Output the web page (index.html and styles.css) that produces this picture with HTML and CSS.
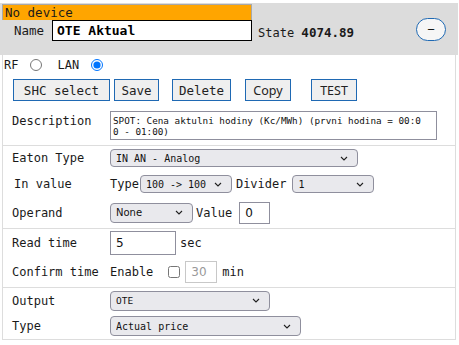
FILE: index.html
```html
<!DOCTYPE html>
<html lang="en">
<head>
    <meta charset="UTF-8">
    <meta name="viewport" content="width=device-width, initial-scale=1.0">
    <title>OTE Aktual</title>
    <link rel="stylesheet" href="styles.css">
</head>
<body>
    <div class="device">
        <div class="device-head">
            <div class="head-left">
                <div class="status">No device</div>
                <div class="name-row">
                    <span class="name-label">Name</span>
                    <input class="name-input" type="text" value="OTE Aktual">
                </div>
            </div>
            <div class="state">State <b>4074.89</b></div>
            <button class="collapse">&minus;</button>
        </div>

        <div class="device-body">
            <div class="conn">
                <span>RF</span> <input type="radio" name="conn">
                <span class="lan">LAN</span> <input type="radio" name="conn" checked>
            </div>

            <div class="actions">
                <button class="btn btn-shc">SHC select</button>
                <button class="btn btn-save">Save</button>
                <button class="btn btn-delete">Delete</button>
                <button class="btn btn-sans btn-copy">Copy</button>
                <button class="btn btn-sans btn-test">TEST</button>
            </div>

            <table class="props">
                <tbody class="group">
                    <tr class="row-desc">
                        <td class="lbl">Description</td>
                        <td><textarea class="desc">SPOT: Cena aktulni hodiny (Kc/MWh) (prvni hodina = 00:00 - 01:00)</textarea></td>
                    </tr>
                </tbody>
                <tbody class="group">
                    <tr class="row-26">
                        <td class="lbl">Eaton Type</td>
                        <td><select class="sel sel-eaton"><option>IN AN - Analog</option></select></td>
                    </tr>
                    <tr class="row-26">
                        <td class="lbl lbl-indent">In value</td>
                        <td class="cell-flex"><span class="txt">Type</span><select class="sel sel-type"><option>100 -&gt; 100</option></select><span class="txt divider">Divider</span><select class="sel sel-div"><option>1</option></select></td>
                    </tr>
                    <tr class="row-op">
                        <td class="lbl">Operand</td>
                        <td class="cell-flex"><select class="sel sel-op"><option>None</option></select><span class="txt">Value</span><input class="inp inp-val" type="text" value="0"></td>
                    </tr>
                </tbody>
                <tbody class="group">
                    <tr class="row-read">
                        <td class="lbl">Read time</td>
                        <td class="cell-flex"><input class="inp inp-read" type="text" value="5"><span class="txt sec">sec</span></td>
                    </tr>
                    <tr class="row-confirm">
                        <td class="lbl">Confirm time</td>
                        <td class="cell-flex"><span class="txt">Enable</span><input class="chk" type="checkbox"><input class="inp inp-confirm" type="text" value="30" disabled><span class="txt min">min</span></td>
                    </tr>
                </tbody>
                <tbody class="group">
                    <tr class="row-26">
                        <td class="lbl">Output</td>
                        <td><select class="sel sel-out"><option>OTE</option></select></td>
                    </tr>
                    <tr class="row-26">
                        <td class="lbl">Type</td>
                        <td><select class="sel sel-price"><option>Actual price</option></select></td>
                    </tr>
                </tbody>
            </table>
        </div>
    </div>
</body>
</html>
```

FILE: styles.css
```css
:root {
    --head-bg: #dcdcdc;
    --line: #dddddd;
    --blue: #1f69b3;
    --btn-bg: #efefef;
    --sel-bg: #e9e9ed;
    --sel-border: #8f8f9d;
}

* {
    box-sizing: border-box;
}

body {
    margin: 0;
    padding-top: 3px;
    font-family: "DejaVu Sans Mono", monospace;
    font-size: 12px;
    color: #1a1a1a;
    background: #fff;
}

.device {
    width: 458px;
}

/* header */
.device-head {
    background: var(--head-bg);
    height: 52px;
    display: flex;
    align-items: flex-start;
    padding-left: 2px;
    font-size: 12.5px;
}

.head-left {
    width: 250px;
}

.status {
    height: 16px;
    margin-top: 1px;
    background: #ffa500;
    border: 1px solid #a8a8a8;
    border-bottom: none;
    line-height: 15px;
    padding-left: 2px;
}

.name-row {
    display: flex;
    align-items: center;
}

.name-label {
    width: 50px;
    padding-left: 12px;
}

.name-input {
    width: 200px;
    height: 21px;
    border: 1px solid #000;
    background: #fff;
    font-family: "DejaVu Sans Mono", monospace;
    font-weight: bold;
    font-size: 13px;
    padding: 0 4px;
    outline: none;
}

.state {
    margin-top: 19px;
    margin-left: 6px;
    height: 21px;
    line-height: 21px;
    font-size: 12px;
}

.state b {
    font-size: 12.5px;
}

.collapse {
    margin-top: 15px;
    margin-left: auto;
    margin-right: 12px;
    width: 30px;
    height: 23px;
    border-radius: 12px;
    border: 1.5px solid var(--blue);
    background: #f6f6f6;
    font-size: 13px;
    line-height: 18px;
    padding: 0;
    color: #111;
}

/* body */
.device-body {
    border-left: 1px solid var(--line);
    border-right: 1px solid var(--line);
    margin-left: 2px;
    width: 454px;
}

.conn {
    height: 18px;
    display: flex;
    align-items: center;
    padding-top: 1px;
    padding-left: 1px;
}

.conn input {
    margin: 0 0 0 12px;
    width: 12px;
    height: 12px;
}

.conn .lan {
    margin-left: 15px;
}

.actions {
    display: flex;
    margin-top: 6px;
    padding-left: 10px;
    height: 22px;
}

.btn {
    height: 22px;
    border: 1.5px solid var(--blue);
    background: var(--btn-bg);
    font-family: "DejaVu Sans Mono", monospace;
    font-size: 12.5px;
    color: #222;
    padding: 0;
}

.btn-sans {
    font-family: "Noto Sans", sans-serif;
    font-size: 12.5px;
}

.btn-shc { width: 97px; }
.btn-save { width: 45px; margin-left: 4px; }
.btn-delete { width: 59px; margin-left: 13px; }
.btn-copy { width: 46px; margin-left: 14px; }
.btn-test { width: 46px; margin-left: 20px; }

/* properties table */
.props {
    width: 100%;
    border-collapse: collapse;
    margin-top: 3px;
}

.props td {
    padding: 0;
    vertical-align: middle;
    white-space: nowrap;
}

.props td.cell-flex {
    display: flex;
    align-items: center;
}

.group {
    border-bottom: 1px solid var(--line);
}

.lbl {
    width: 107px;
    padding-left: 9px !important;
}

.lbl-indent {
    padding-left: 11px !important;
}

.row-desc td {
    height: 41px;
}

.row-desc .lbl {
    vertical-align: top;
    padding-top: 10px !important;
}

.row-26 td { height: 26px; }
.row-op td { height: 31px; }
.row-read td { height: 28px; }
.row-confirm td { height: 30px; }

.desc {
    display: block;
    margin-top: 3px;
    width: 327px;
    height: 29px;
    resize: none;
    overflow: hidden;
    border: 1px solid #8f8f9d;
    font-family: "DejaVu Sans Mono", monospace;
    font-size: 9.3px;
    line-height: 11px;
    padding: 3px 13px 3px 2px;
    word-break: break-all;
    color: #111;
}

.sel {
    appearance: none;
    -webkit-appearance: none;
    height: 18px;
    border: 1px solid var(--sel-border);
    border-radius: 4px;
    background-color: var(--sel-bg);
    background-image: url("data:image/svg+xml,%3Csvg xmlns='http://www.w3.org/2000/svg' width='8' height='5' viewBox='0 0 8 5'%3E%3Cpath d='M1 1l3 3 3-3' fill='none' stroke='%23222' stroke-width='1.1'/%3E%3C/svg%3E");
    background-repeat: no-repeat;
    background-position: right 9px center;
    font-family: "DejaVu Sans Mono", monospace;
    font-size: 10px;
    color: #111;
    padding: 0 18px 0 5px;
    margin: 0;
}

.sel-eaton { width: 248px; }
.sel-type { width: 92px; margin-left: 1px; margin-right: 3px; }
.divider { margin-left: 1px; }
.sel-div { width: 82px; margin-left: 6px; }
.sel-op {
    width: 83px;
    height: 20px;
    font-family: "DejaVu Sans", sans-serif;
    font-size: 10px;
    margin-right: 3px;
}
.sel-out { width: 160px; height: 20px; font-size: 9.5px; }
.sel-price { width: 191px; height: 20px; font-size: 10px; }

.inp {
    border: 1px solid #8f8f9d;
    font-family: "DejaVu Sans", sans-serif;
    font-size: 12px;
    padding: 0 5px;
    margin: 0;
    color: #111;
    background: #fff;
}

.inp-val { width: 31px; height: 22px; margin-left: 7px; }
.inp-read { width: 66px; height: 24px; }
.sec { margin-left: 4px; }
.inp-confirm { width: 32px; height: 22px; margin-left: 5px; color: #999; border-color: #c8c8c8; }
.min { margin-left: 5px; }

.chk {
    width: 12px;
    height: 12px;
    margin: 0 0 0 15px;
}
```
